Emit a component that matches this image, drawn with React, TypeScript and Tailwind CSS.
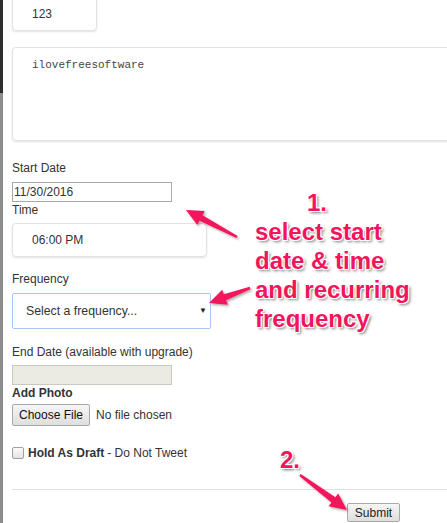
import React from 'react';

const pink = '#f2145c';

function arrowPoints(x1: number, y1: number, x2: number, y2: number, headLen = 17, headW = 8, tailW = 1.2, neckW = 3.2) {
  const dx = x2 - x1;
  const dy = y2 - y1;
  const len = Math.hypot(dx, dy);
  const ux = dx / len;
  const uy = dy / len;
  const nx = -uy;
  const ny = ux;
  const bx = x2 - ux * headLen;
  const by = y2 - uy * headLen;
  const pts = [
    [x1 + nx * tailW, y1 + ny * tailW],
    [bx + nx * neckW, by + ny * neckW],
    [bx + nx * headW, by + ny * headW],
    [x2, y2],
    [bx - nx * headW, by - ny * headW],
    [bx - nx * neckW, by - ny * neckW],
    [x1 - nx * tailW, y1 - ny * tailW],
  ];
  return pts.map(p => p.join(',')).join(' ');
}

const note =
  "font-['Liberation_Sans',Arial,sans-serif] font-bold text-[24px] leading-[29px] text-[#f2145c] [text-shadow:-1px_-1px_0_#fff,1px_-1px_0_#fff,-1px_1px_0_#fff,1px_1px_0_#fff,2px_2px_3px_rgba(0,0,0,0.55)]";

export default function App() {
  return (
    <div className="relative w-[447px] h-[523px] overflow-hidden bg-white font-['Liberation_Sans',Arial,sans-serif] text-[12px] text-[#333]">
      <div className="flex">
        {/* left edge strip */}
        <div className="w-[3px] shrink-0 flex flex-col">
          <div className="h-[93px] bg-[#2e2e2e]" />
          <div className="h-[430px] bg-[#8c8c8c]" />
        </div>

        <div className="pl-[9px] w-[470px] shrink-0">
          <div className="-mt-[3px] w-[85px] h-[34px] border border-[#e2e2e2] rounded-[4px] shadow-[0_1px_2px_rgba(0,0,0,0.12)] flex items-center pl-[19px] leading-none">
            123
          </div>

          <div className="mt-[16px] h-[94px] border border-[#e2e2e2] rounded-[4px] shadow-[0_1px_2px_rgba(0,0,0,0.12)] pl-[19px] pt-[9px] font-['Liberation_Mono',monospace] text-[11px] text-[#444]">
            ilovefreesoftware
          </div>

          <div className="mt-[19px] leading-[16px]">Start Date</div>
          <div className="mt-[6px] w-[160px] h-[20px] border border-[#a9a9a9] flex items-center pl-[1px] leading-none">
            11/30/2016
          </div>

          <div className="leading-[16px]">Time</div>
          <div className="mt-[5px] w-[195px] h-[34px] border border-[#e2e2e2] rounded-[4px] shadow-[0_1px_2px_rgba(0,0,0,0.12)] flex items-center pl-[19px] leading-none">
            06:00 PM
          </div>

          <div className="mt-[14px] leading-[16px]">Frequency</div>
          <div className="mt-[6px] w-[199px] h-[36px] border border-[#a7c6f2] rounded-[2px] flex items-center justify-between pl-[13px] pr-[3px] leading-none">
            <span className="text-[12.3px]">Select a frequency...</span>
            <span className="text-[8px] text-[#222]">▼</span>
          </div>

          <div className="mt-[15px] leading-[16px]">End Date (available with upgrade)</div>
          <div className="mt-[5px] w-[160px] h-[20px] border border-[#c9c9c2] bg-[#ebebe4]" />

          <div className="font-bold leading-[16px]">Add Photo</div>
          <div className="mt-[3px] flex items-center">
            <div className="w-[78px] h-[22px] border border-[#a9a9a9] rounded-[2px] bg-gradient-to-b from-[#f6f6f6] to-[#dedede] flex items-center justify-center leading-none text-[#111]">
              Choose File
            </div>
            <span className="ml-[6px]">No file chosen</span>
          </div>

          <div className="mt-[19px] h-[16px] flex items-center">
            <div className="w-[12px] h-[12px] border border-[#a0a0a0] rounded-[2px] bg-gradient-to-b from-[#fafafa] to-[#e4e4e4]" />
            <span className="ml-[4px] font-bold">Hold As Draft</span>
            <span className="ml-[3px]">- Do Not Tweet</span>
          </div>

          <div className="mt-[28px] h-0 border-t border-[#e2e2e2]" />

          <div className="mt-[13px] ml-[335px] w-[53px] h-[19px] border border-[#a9a9a9] rounded-[2px] bg-gradient-to-b from-[#f6f6f6] to-[#dedede] flex items-center justify-center leading-none text-[#222]">
            Submit
          </div>
        </div>
      </div>

      {/* annotations */}
      <div className={`absolute left-[255px] top-[188px] ${note}`}>
        <div className="pl-[52px]">1.</div>
        <div>select start</div>
        <div>date &amp; time</div>
        <div>and recurring</div>
        <div>frequency</div>
      </div>
      <div className={`absolute left-[280px] top-[445px] ${note}`}>2.</div>

      <svg className="absolute inset-0 pointer-events-none" width="447" height="523" viewBox="0 0 447 523">
        <defs>
          <filter id="sh" x="-20%" y="-20%" width="140%" height="140%">
            <feDropShadow dx="1.5" dy="1.5" stdDeviation="1.2" floodColor="#000" floodOpacity="0.35" />
          </filter>
        </defs>
        <g fill={pink} filter="url(#sh)">
          <polygon points={arrowPoints(237, 237, 186, 210)} />
          <polygon points={arrowPoints(250, 288, 209, 303)} />
          <polygon points={arrowPoints(300, 475, 347, 510)} />
        </g>
      </svg>
    </div>
  );
}
